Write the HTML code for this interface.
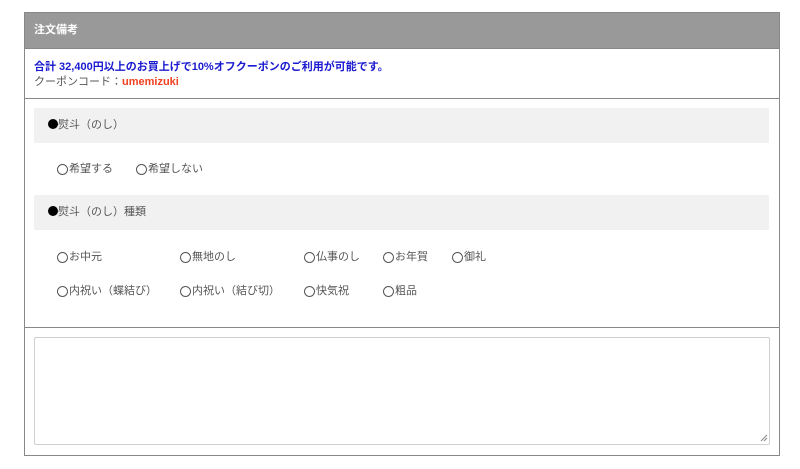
<!DOCTYPE html>
<html><head><meta charset="utf-8"><style>
body{margin:0;width:800px;height:469px;background:#fff;font-family:"Liberation Sans","Noto Sans CJK JP",sans-serif;position:relative;overflow:hidden}
.a{position:absolute}
.box{left:24px;top:12px;width:754px;height:442px;border:1px solid #888}
.hd{left:25px;top:13px;width:754px;height:35px;background:#999;color:#fff;font-size:11px;font-weight:bold;line-height:35px;text-indent:9px}
.hl{left:25px;width:754px;height:1px;background:#888}
.g{left:34px;width:735px;height:35px;background:#f1f1f1;font-size:11px;color:#555;line-height:35px;padding-left:14px;box-sizing:border-box}
.g b{display:inline-block;width:10px;height:10px;border-radius:50%;background:#000;vertical-align:-1px}
.r{font-size:11px;color:#555;line-height:14px;white-space:nowrap}
.r i{display:inline-block;width:9px;height:9px;border:1px solid #555;border-radius:50%;vertical-align:-3px;margin-right:1px}
.ta{left:34px;top:337px;width:734px;height:106px;border:1px solid #d0d0d0;border-radius:2px}
</style></head><body>
<div class="a box"></div>
<div class="a hd">注文備考</div>
<div class="a hl" style="top:48px"></div>
<div class="a" style="left:34px;top:58px;font-size:11px;color:#1a1ad0;font-weight:bold">合計 32,400円以上のお買上げで10%オフクーポンのご利用が可能です。</div>
<div class="a" style="left:34px;top:73px;font-size:11px;color:#555">クーポンコード：<span style="color:#f04020;font-weight:bold">umemizuki</span></div>
<div class="a hl" style="top:98px"></div>
<div class="a g" style="top:108px"><b></b>熨斗（のし）</div>
<div class="a r" style="left:57px;top:162px"><i></i>希望する</div>
<div class="a r" style="left:136px;top:162px"><i></i>希望しない</div>
<div class="a g" style="top:195px"><b></b>熨斗（のし）種類</div>
<div class="a r" style="left:57px;top:250px"><i></i>お中元</div>
<div class="a r" style="left:180px;top:250px"><i></i>無地のし</div>
<div class="a r" style="left:304px;top:250px"><i></i>仏事のし</div>
<div class="a r" style="left:383px;top:250px"><i></i>お年賀</div>
<div class="a r" style="left:452px;top:250px"><i></i>御礼</div>
<div class="a r" style="left:57px;top:284px"><i></i>内祝い（蝶結び）</div>
<div class="a r" style="left:180px;top:284px"><i></i>内祝い（結び切）</div>
<div class="a r" style="left:304px;top:284px"><i></i>快気祝</div>
<div class="a r" style="left:383px;top:284px"><i></i>粗品</div>
<div class="a hl" style="top:327px"></div>
<div class="a ta"></div>
<svg class="a" style="left:760px;top:434px" width="8" height="8"><path d="M1 7L7 1M4 7L7 4" stroke="#888" stroke-width="1"/></svg>
</body></html>
